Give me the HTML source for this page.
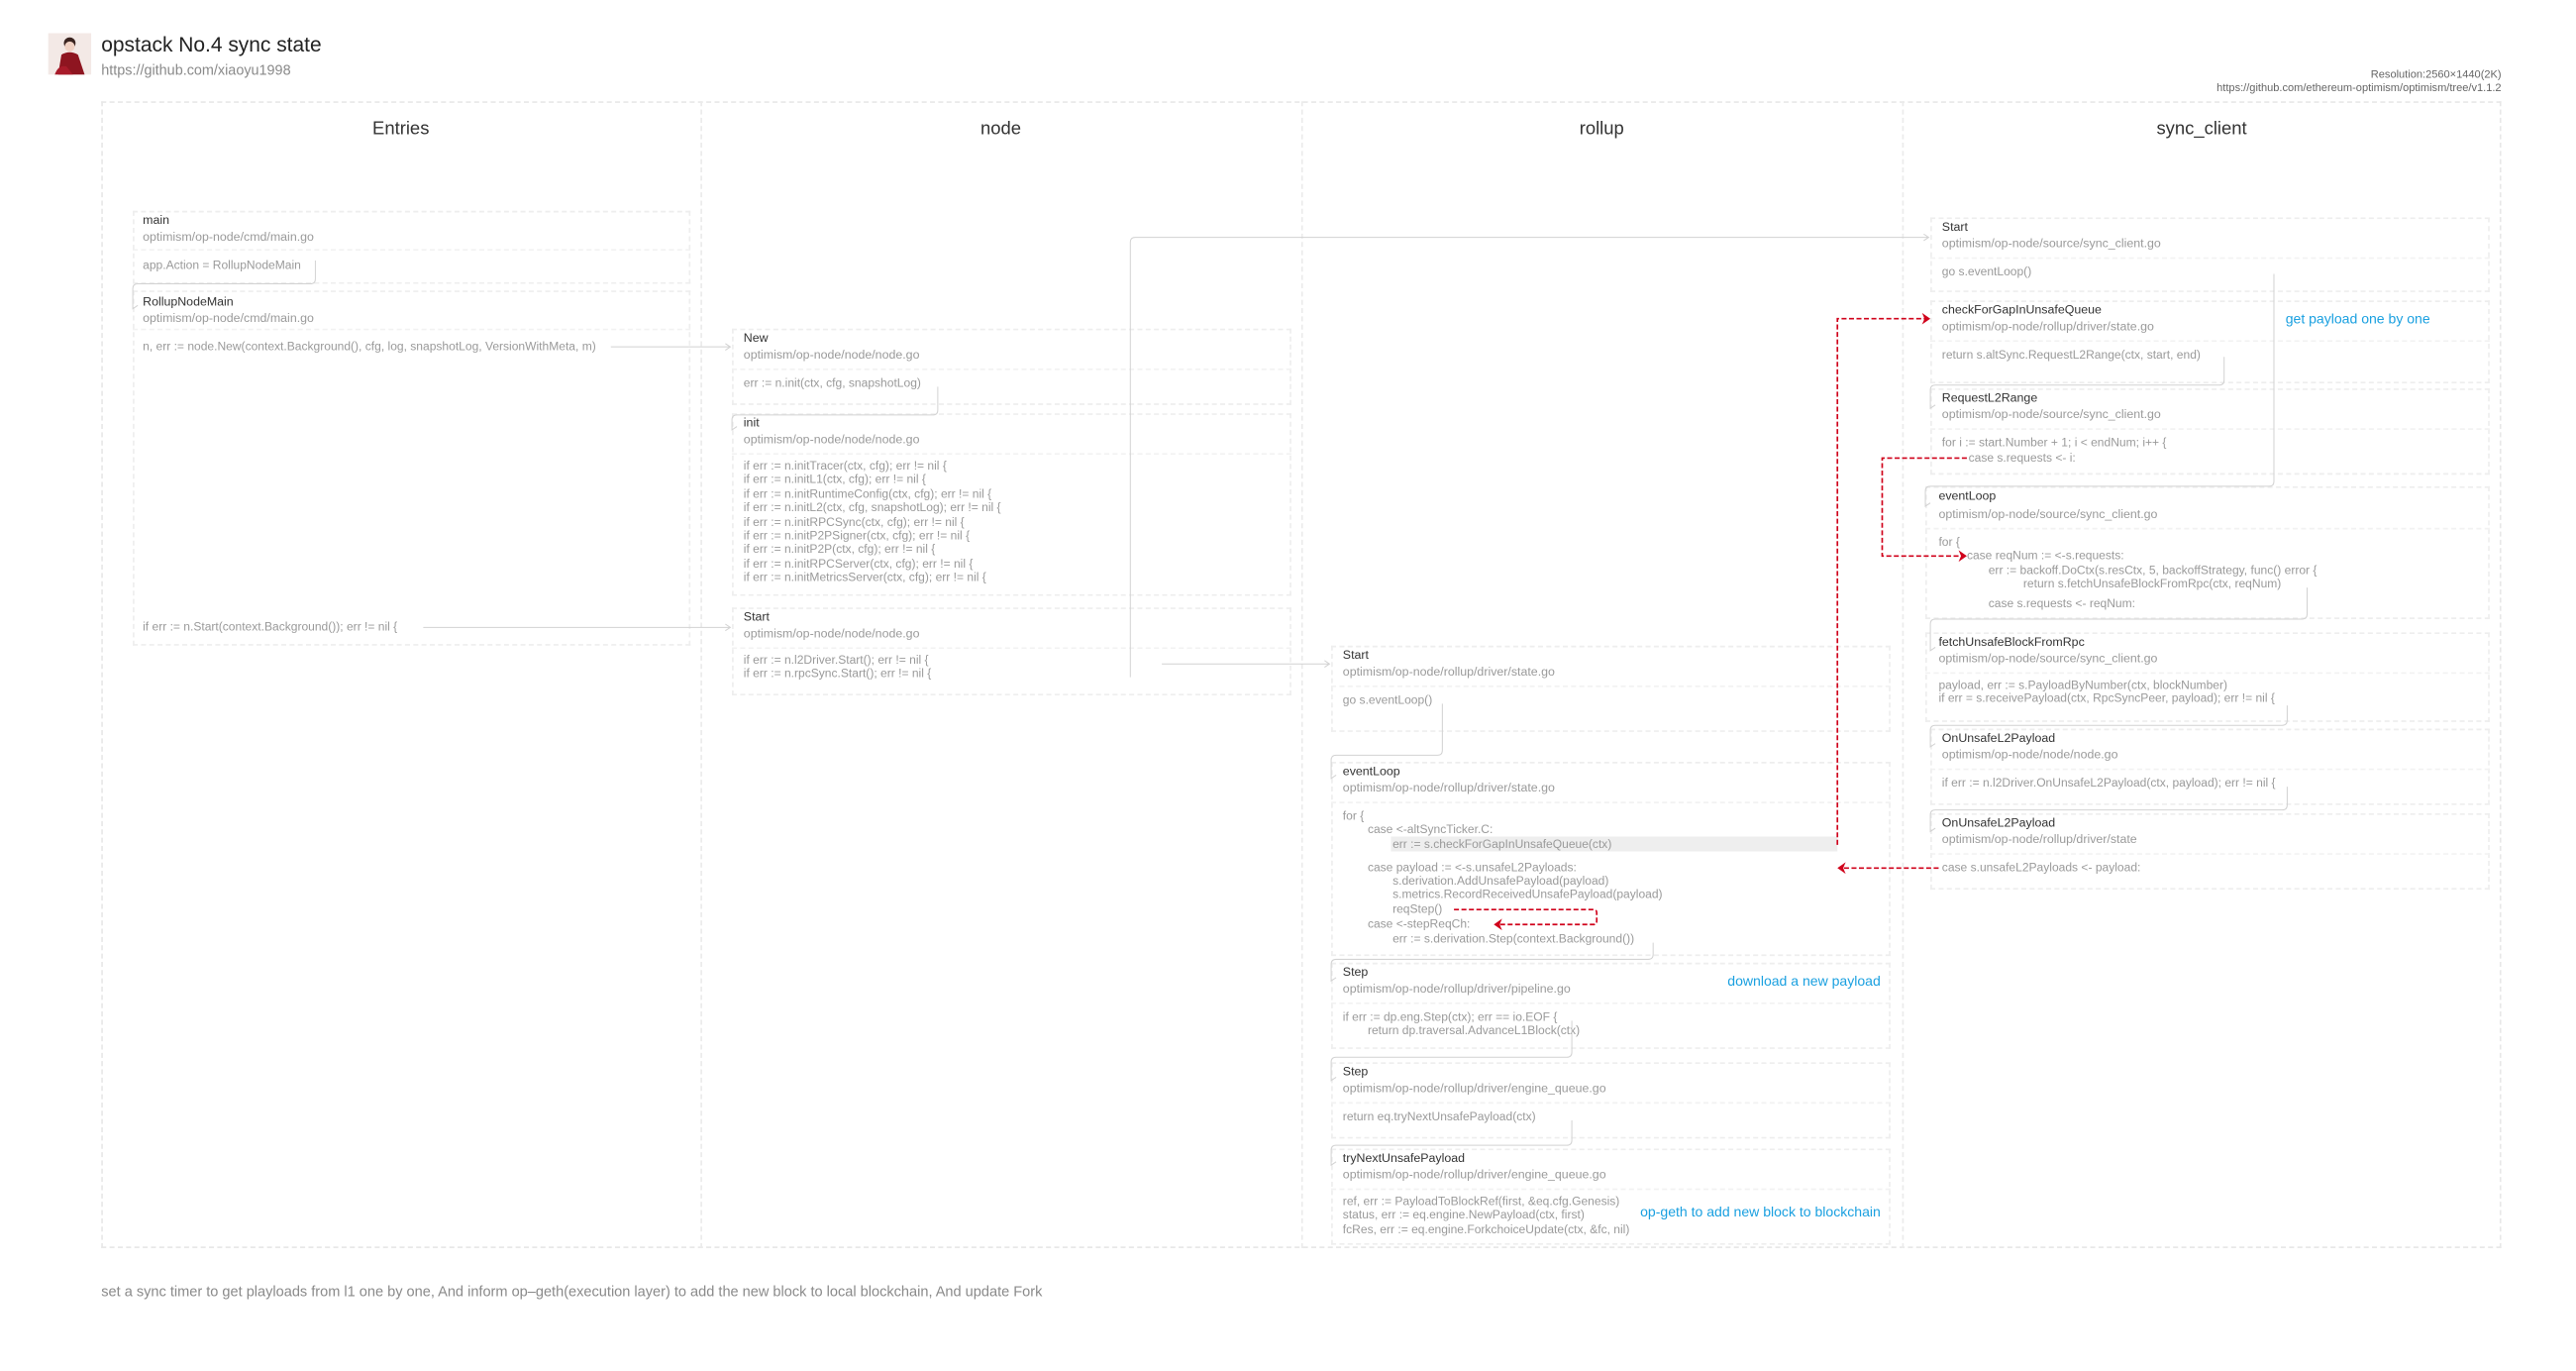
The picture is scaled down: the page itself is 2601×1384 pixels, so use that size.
<!DOCTYPE html>
<html><head><meta charset="utf-8">
<style>
html,body{margin:0;padding:0;background:#fff;}
body{width:2601px;height:1384px;overflow:hidden;position:relative;font-family:"Liberation Sans",sans-serif;}
#w{position:absolute;left:0;top:0;width:1552px;height:826px;transform:scale(1.6759,1.6755);transform-origin:0 0;}
.a{position:absolute;white-space:nowrap;line-height:10px;}
.box{position:absolute;border:0.6px dashed #eeeeee;box-sizing:border-box;}
.sep{position:absolute;height:0;border-top:0.6px dashed #f2f2f2;}
.t{font-size:7.4px;color:#333;}
.p{font-size:7.4px;color:#9a9a9a;}
.c{font-size:7.2px;color:#9a9a9a;}
.h{font-size:11px;color:#333;}
.b{font-size:8.4px;color:#1aa0e0;}
.col{position:absolute;top:61px;height:691px;border-left:0.6px dashed #ebebeb;}
</style></head><body><div id="w">
<svg class="a" style="left:29px;top:20px" width="26" height="25" viewBox="0 0 26 25"><rect width="26" height="25" fill="#f3e9e6"/><circle cx="13" cy="6" r="3.5" fill="#3a2420"/><circle cx="13" cy="8" r="3" fill="#f1d2c4"/><path d="M6 25 L8 13 Q13 10 18 13 L22 25Z" fill="#8e1520"/><path d="M4 25 Q6 19 11 20 L15 25Z" fill="#a81b2a"/></svg>
<div class="a" style="left:61px;top:21px;font-size:12.5px;line-height:13px;color:#222">opstack No.4 sync state</div>
<div class="a" style="left:61px;top:37px;font-size:8.6px;color:#8a8a8a">https://github.com/xiaoyu1998</div>
<div class="a" style="right:45px;top:41px;font-size:6.6px;color:#666;text-align:right">Resolution:2560×1440(2K)</div>
<div class="a" style="right:45px;top:49px;font-size:6.6px;color:#666;text-align:right">https://github.com/ethereum-optimism/optimism/tree/v1.1.2</div>
<div class="box" style="left:61px;top:61px;width:1446px;height:691px;border-color:#e8e8e8"></div>
<div class="col" style="left:422px"></div><div class="col" style="left:784px"></div><div class="col" style="left:1146px"></div>
<div class="a h" style="left:61px;width:361px;text-align:center;top:73px">Entries</div>
<div class="a h" style="left:422px;width:362px;text-align:center;top:73px">node</div>
<div class="a h" style="left:784px;width:362px;text-align:center;top:73px">rollup</div>
<div class="a h" style="left:1146px;width:361px;text-align:center;top:73px">sync_client</div>

<div class="box" style="left:80px;top:127px;width:336px;height:44px"></div><div class="sep" style="left:80px;top:150px;width:336px"></div>
<div class="a t" style="left:86px;top:128px">main</div><div class="a p" style="left:86px;top:138px">optimism/op-node/cmd/main.go</div>
<div class="a c" style="left:86px;top:155px">app.Action = RollupNodeMain</div>
<div class="box" style="left:80px;top:175px;width:336px;height:214px"></div><div class="sep" style="left:80px;top:198px;width:336px"></div>
<div class="a t" style="left:86px;top:177px">RollupNodeMain</div><div class="a p" style="left:86px;top:187px">optimism/op-node/cmd/main.go</div>
<div class="a c" style="left:86px;top:204px">n, err := node.New(context.Background(), cfg, log, snapshotLog, VersionWithMeta, m)</div>
<div class="a c" style="left:86px;top:373px">if err := n.Start(context.Background()); err != nil {</div>

<div class="box" style="left:441px;top:198px;width:337px;height:46px"></div><div class="sep" style="left:441px;top:222px;width:337px"></div>
<div class="a t" style="left:448px;top:199px">New</div><div class="a p" style="left:448px;top:209px">optimism/op-node/node/node.go</div>
<div class="a c" style="left:448px;top:226px">err := n.init(ctx, cfg, snapshotLog)</div>
<div class="box" style="left:441px;top:249px;width:337px;height:110px"></div><div class="sep" style="left:441px;top:273px;width:337px"></div>
<div class="a t" style="left:448px;top:250px">init</div><div class="a p" style="left:448px;top:260px">optimism/op-node/node/node.go</div>
<div class="a c" style="left:448px;top:277px;line-height:8.4px">if err := n.initTracer(ctx, cfg); err != nil {<br>if err := n.initL1(ctx, cfg); err != nil {<br>if err := n.initRuntimeConfig(ctx, cfg); err != nil {<br>if err := n.initL2(ctx, cfg, snapshotLog); err != nil {<br>if err := n.initRPCSync(ctx, cfg); err != nil {<br>if err := n.initP2PSigner(ctx, cfg); err != nil {<br>if err := n.initP2P(ctx, cfg); err != nil {<br>if err := n.initRPCServer(ctx, cfg); err != nil {<br>if err := n.initMetricsServer(ctx, cfg); err != nil {</div>
<div class="box" style="left:441px;top:366px;width:337px;height:53px"></div><div class="sep" style="left:441px;top:390px;width:337px"></div>
<div class="a t" style="left:448px;top:367px">Start</div><div class="a p" style="left:448px;top:377px">optimism/op-node/node/node.go</div>
<div class="a c" style="left:448px;top:394px;line-height:8.4px">if err := n.l2Driver.Start(); err != nil {<br>if err := n.rpcSync.Start(); err != nil {</div>

<div class="box" style="left:802px;top:389px;width:337px;height:52px"></div><div class="sep" style="left:802px;top:413px;width:337px"></div>
<div class="a t" style="left:809px;top:390px">Start</div><div class="a p" style="left:809px;top:400px">optimism/op-node/rollup/driver/state.go</div>
<div class="a c" style="left:809px;top:417px">go s.eventLoop()</div>
<div class="box" style="left:802px;top:459px;width:337px;height:117px"></div><div class="sep" style="left:802px;top:483px;width:337px"></div>
<div class="a t" style="left:809px;top:460px">eventLoop</div><div class="a p" style="left:809px;top:470px">optimism/op-node/rollup/driver/state.go</div>
<div style="position:absolute;left:838px;top:504px;width:269px;height:9px;background:#eeeeee"></div>
<div class="a c" style="left:809px;top:487px">for {</div>
<div class="a c" style="left:824px;top:495px">case &lt;-altSyncTicker.C:</div>
<div class="a c" style="left:839px;top:504px">err := s.checkForGapInUnsafeQueue(ctx)</div>
<div class="a c" style="left:824px;top:518px">case payload := &lt;-s.unsafeL2Payloads:</div>
<div class="a c" style="left:839px;top:527px;line-height:8.4px">s.derivation.AddUnsafePayload(payload)<br>s.metrics.RecordReceivedUnsafePayload(payload)<br>reqStep()</div>
<div class="a c" style="left:824px;top:552px">case &lt;-stepReqCh:</div>
<div class="a c" style="left:839px;top:561px">err := s.derivation.Step(context.Background())</div>
<div class="box" style="left:802px;top:580px;width:337px;height:52px"></div><div class="sep" style="left:802px;top:604px;width:337px"></div>
<div class="a t" style="left:809px;top:581px">Step</div><div class="a p" style="left:809px;top:591px">optimism/op-node/rollup/driver/pipeline.go</div>
<div class="a b" style="right:419px;top:586px">download a new payload</div>
<div class="a c" style="left:809px;top:608px">if err := dp.eng.Step(ctx); err == io.EOF {</div>
<div class="a c" style="left:824px;top:616px">return dp.traversal.AdvanceL1Block(ctx)</div>
<div class="box" style="left:802px;top:640px;width:337px;height:46px"></div><div class="sep" style="left:802px;top:664px;width:337px"></div>
<div class="a t" style="left:809px;top:641px">Step</div><div class="a p" style="left:809px;top:651px">optimism/op-node/rollup/driver/engine_queue.go</div>
<div class="a c" style="left:809px;top:668px">return eq.tryNextUnsafePayload(ctx)</div>
<div class="box" style="left:802px;top:692px;width:337px;height:58px"></div><div class="sep" style="left:802px;top:716px;width:337px"></div>
<div class="a t" style="left:809px;top:693px">tryNextUnsafePayload</div><div class="a p" style="left:809px;top:703px">optimism/op-node/rollup/driver/engine_queue.go</div>
<div class="a c" style="left:809px;top:720px;line-height:8.4px">ref, err := PayloadToBlockRef(first, &amp;eq.cfg.Genesis)<br>status, err := eq.engine.NewPayload(ctx, first)<br>fcRes, err := eq.engine.ForkchoiceUpdate(ctx, &amp;fc, nil)</div>
<div class="a b" style="right:419px;top:725px">op-geth to add new block to blockchain</div>

<div class="box" style="left:1163px;top:131px;width:337px;height:45px"></div><div class="sep" style="left:1163px;top:155px;width:337px"></div>
<div class="a t" style="left:1170px;top:132px">Start</div><div class="a p" style="left:1170px;top:142px">optimism/op-node/source/sync_client.go</div>
<div class="a c" style="left:1170px;top:159px">go s.eventLoop()</div>
<div class="box" style="left:1163px;top:181px;width:337px;height:50px"></div><div class="sep" style="left:1163px;top:205px;width:337px"></div>
<div class="a t" style="left:1170px;top:182px">checkForGapInUnsafeQueue</div><div class="a p" style="left:1170px;top:192px">optimism/op-node/rollup/driver/state.go</div>
<div class="a b" style="left:1377px;top:187px">get payload one by one</div>
<div class="a c" style="left:1170px;top:209px">return s.altSync.RequestL2Range(ctx, start, end)</div>
<div class="box" style="left:1163px;top:234px;width:337px;height:52px"></div><div class="sep" style="left:1163px;top:258px;width:337px"></div>
<div class="a t" style="left:1170px;top:235px">RequestL2Range</div><div class="a p" style="left:1170px;top:245px">optimism/op-node/source/sync_client.go</div>
<div class="a c" style="left:1170px;top:262px">for i := start.Number + 1; i &lt; endNum; i++ {</div>
<div class="a c" style="left:1186px;top:271px">case s.requests &lt;- i:</div>
<div class="box" style="left:1160px;top:293px;width:340px;height:80px"></div><div class="sep" style="left:1160px;top:318px;width:340px"></div>
<div class="a t" style="left:1168px;top:294px">eventLoop</div><div class="a p" style="left:1168px;top:305px">optimism/op-node/source/sync_client.go</div>
<div class="a c" style="left:1168px;top:322px">for {</div>
<div class="a c" style="left:1185px;top:330px">case reqNum := &lt;-s.requests:</div>
<div class="a c" style="left:1198px;top:339px">err := backoff.DoCtx(s.resCtx, 5, backoffStrategy, func() error {</div>
<div class="a c" style="left:1219px;top:347px">return s.fetchUnsafeBlockFromRpc(ctx, reqNum)</div>
<div class="a c" style="left:1198px;top:359px">case s.requests &lt;- reqNum:</div>
<div class="box" style="left:1160px;top:381px;width:340px;height:54px"></div><div class="sep" style="left:1160px;top:405px;width:340px"></div>
<div class="a t" style="left:1168px;top:382px">fetchUnsafeBlockFromRpc</div><div class="a p" style="left:1168px;top:392px">optimism/op-node/source/sync_client.go</div>
<div class="a c" style="left:1168px;top:409px;line-height:8.4px">payload, err := s.PayloadByNumber(ctx, blockNumber)<br>if err = s.receivePayload(ctx, RpcSyncPeer, payload); err != nil {</div>
<div class="box" style="left:1163px;top:439px;width:337px;height:46px"></div><div class="sep" style="left:1163px;top:463px;width:337px"></div>
<div class="a t" style="left:1170px;top:440px">OnUnsafeL2Payload</div><div class="a p" style="left:1170px;top:450px">optimism/op-node/node/node.go</div>
<div class="a c" style="left:1170px;top:467px">if err := n.l2Driver.OnUnsafeL2Payload(ctx, payload); err != nil {</div>
<div class="box" style="left:1163px;top:490px;width:337px;height:46px"></div><div class="sep" style="left:1163px;top:514px;width:337px"></div>
<div class="a t" style="left:1170px;top:491px">OnUnsafeL2Payload</div><div class="a p" style="left:1170px;top:501px">optimism/op-node/rollup/driver/state</div>
<div class="a c" style="left:1170px;top:518px">case s.unsafeL2Payloads &lt;- payload:</div>

<svg class="a" style="left:0;top:0" width="1552" height="826" viewBox="0 0 1552 826" fill="none">
<g stroke="#d2d2d2" stroke-width="0.6">
<path d="M190 157 V168 Q190 171 187 171 H83 Q80 171 80 174 V186 L83 184"/>
<path d="M368 209 H440 M437 207 L440 209 L437 211"/>
<path d="M255 378 H440 M437 376 L440 378 L437 380"/>
<path d="M565 233 V247 Q565 250 562 250 H444 Q441 250 441 253 V259 L444 257"/>
<path d="M700 400 H801 M798 398 L801 400 L798 402"/>
<path d="M681 408 V146 Q681 143 684 143 H1162 M1159 141 L1162 143 L1159 145"/>
<path d="M869 424 V452 Q869 455 866 455 H805 Q802 455 802 458 V469 L805 467"/>
<path d="M996 568 V575 Q996 578 993 578 H805 Q802 578 802 581 V591 L805 589"/>
<path d="M947 615 V634 Q947 637 944 637 H805 Q802 637 802 640 V651 L805 649"/>
<path d="M947 675 V687 Q947 690 944 690 H805 Q802 690 802 693 V702 L805 700"/>
<path d="M1370 165 V290 Q1370 293 1367 293 H1163 Q1160 293 1160 296 V305 L1163 303"/>
<path d="M1340 215 V229 Q1340 232 1337 232 H1166 Q1163 232 1163 235 V246 L1166 244"/>
<path d="M1390 354 V370 Q1390 373 1387 373 H1166 Q1163 373 1163 376 V392 L1166 390"/>
<path d="M1378 425 V434 Q1378 437 1375 437 H1166 Q1163 437 1163 440 V450 L1166 448"/>
<path d="M1378 474 V485 Q1378 488 1375 488 H1166 Q1163 488 1163 491 V501 L1166 499"/>
</g>
<g stroke="#d0021b" stroke-width="1" stroke-dasharray="3 1.5">
<path d="M1107 509 V192 H1160"/>
<path d="M1185 276 H1134 V335 H1182"/>
<path d="M1168 523 H1110"/>
<path d="M876 548 H960 Q962 548 962 550 V555 Q962 557 960 557 H903"/>
</g>
<g fill="#d0021b">
<path d="M1163 192 L1158 188.5 L1159.5 192 L1158 195.5Z"/>
<path d="M1185 335 L1180 331.5 L1181.5 335 L1180 338.5Z"/>
<path d="M1107 523 L1112 519.5 L1110.5 523 L1112 526.5Z"/>
<path d="M900 557 L905 553.5 L903.5 557 L905 560.5Z"/>
</g>
</svg>

<div class="a" style="left:61px;top:773px;font-size:8.7px;color:#8a8a8a">set a sync timer to get playloads from l1 one by one, And inform op–geth(execution layer) to add the new block to local blockchain, And update Fork</div>
</div></body></html>
